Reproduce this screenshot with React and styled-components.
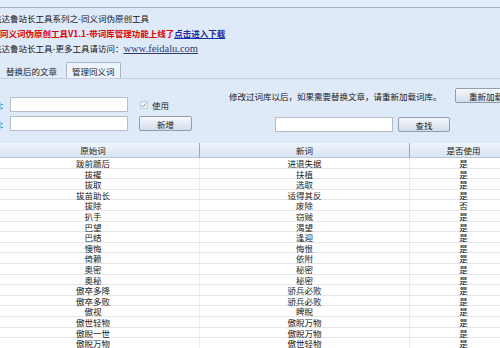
import React from 'react'
import styled, { createGlobalStyle } from 'styled-components'

const GlobalStyle = createGlobalStyle`
  html, body {
    margin: 0;
    padding: 0;
    background: #dfeaf8;
    overflow: hidden;
  }
  body {
    width: 500px;
    height: 348px;
    font-family: "Noto Sans CJK SC", "Liberation Sans", sans-serif;
    font-size: 8.5px;
    color: #222;
  }
`

const Page = styled.div`
  width: 530px;
  margin-left: -13px;
`

const TopStrip = styled.div`
  height: 7px;
  background: #e4eefb;
  border-bottom: 1px solid #a7b4c3;
`

const Intro = styled.div`
  padding-top: 3px;
`

const Line = styled.div`
  height: 15px;
  line-height: 15px;
  white-space: nowrap;
  padding-left: ${p => p.$indent}px;
  color: ${p => (p.$red ? '#e00000' : '#151515')};
  font-weight: ${p => (p.$bold ? 'bold' : 'normal')};
`

const DownloadLink = styled.a`
  color: #1b2ba0;
  text-decoration: underline;
`

const SiteLink = styled.a`
  font-family: "Liberation Serif", serif;
  font-size: 10.5px;
  color: #2c3a78;
  text-decoration: underline;
`

const Tabs = styled.div`
  display: flex;
  align-items: flex-end;
  gap: 4px;
  margin-top: 6px;
  padding-left: 14px;
  height: 16px;
  border-bottom: 1px solid #c3d0df;
`

const Tab = styled.div`
  height: 16px;
  line-height: 16px;
  box-sizing: border-box;
  padding: 0 ${p => (p.$active ? 5 : 4)}px;
  color: #222;
  background: ${p => (p.$active ? '#eef4fb' : 'transparent')};
  border: 1px solid ${p => (p.$active ? '#a9b5c2' : 'transparent')};
  border-bottom: none;
  border-radius: 2px 2px 0 0;
`

const Panel = styled.div`
  display: flex;
  height: 64px;
`

const LeftForm = styled.div`
  display: grid;
  grid-template-columns: 23px 129px 53px;
  grid-template-rows: 15px 15px;
  row-gap: 4px;
  padding-top: 18px;
  align-items: center;
`

const Label = styled.span`
  justify-self: end;
  padding-right: 7px;
  white-space: nowrap;
  color: #222;
`

const TextBox = styled.div`
  width: ${p => p.$w}px;
  height: 15px;
  box-sizing: border-box;
  background: #fff;
  border: 1px solid #b4bdc8;
`

const CheckRow = styled.div`
  display: flex;
  align-items: center;
  gap: 4px;
  padding-left: 1px;
`

const CheckBox = styled.span`
  display: flex;
  align-items: center;
  justify-content: center;
  width: 8px;
  height: 8px;
  box-sizing: border-box;
  border: 1px solid #c6ccd4;
  background: #eef1f5;
`

const Button = styled.div`
  width: ${p => p.$w}px;
  height: 15px;
  box-sizing: border-box;
  display: flex;
  align-items: center;
  justify-content: center;
  white-space: nowrap;
  color: #1e1e1e;
  background: linear-gradient(#f6f8fc, #d4ddeb);
  border: 1px solid #8e9db0;
  border-radius: 2px;
`

const RightForm = styled.div`
  display: flex;
  flex-direction: column;
  padding: 9px 0 0 37px;
`

const NoticeRow = styled.div`
  display: flex;
  align-items: center;
  gap: 13px;
  height: 15px;
  white-space: nowrap;
`

const SearchRow = styled.div`
  display: flex;
  align-items: center;
  gap: 5px;
  margin-top: 14px;
  padding-left: 46px;
`

const Table = styled.div`
  display: grid;
  grid-template-columns: 213px 210px 1fr;
  background: #fff;
`

const HeadCell = styled.div`
  height: 15px;
  line-height: 14px;
  box-sizing: border-box;
  text-align: center;
  color: #222;
  background: linear-gradient(#eef4fb, #d9e5f3);
  border-bottom: 1px solid #b6c6d8;
  border-right: ${p => (p.$last ? 'none' : '1px solid #97a9bf')};
`

const Cell = styled.div`
  height: 10.6px;
  line-height: 10px;
  box-sizing: border-box;
  text-align: center;
  white-space: nowrap;
  color: #1a1a1a;
  border-bottom: 1px solid #e6e6e6;
  border-right: ${p => (p.$last ? 'none' : '1px solid #ececec')};
`

const rows = [
  ['跋前踬后', '进退失据', '是'],
  ['拔擢', '扶植', '是'],
  ['拔取', '选取', '是'],
  ['拔苗助长', '适得其反', '是'],
  ['拔除', '废除', '否'],
  ['扒手', '窃贼', '是'],
  ['巴望', '渴望', '是'],
  ['巴结', '逢迎', '是'],
  ['懊悔', '悔恨', '是'],
  ['倚赖', '依附', '是'],
  ['奥密', '秘密', '是'],
  ['奥秘', '秘密', '是'],
  ['傲卒多降', '骄兵必败', '是'],
  ['傲卒多败', '骄兵必败', '是'],
  ['傲视', '睥睨', '是'],
  ['傲世轻物', '傲睨万物', '是'],
  ['傲睨一世', '傲睨万物', '是'],
  ['傲睨万物', '傲世轻物', '是'],
  ['傲慢', '高傲', '是'],
]

const Check = () => (
  <svg width="6" height="6" viewBox="0 0 6 6">
    <path d="M0.8 3.2 L2.4 4.8 L5.3 1.2" stroke="#8a929c" strokeWidth="1" fill="none" />
  </svg>
)

export default function App() {
  return (
    <Page>
      <GlobalStyle />
      <TopStrip />
      <Intro>
        <Line $indent={6}>飞达鲁站长工具系列之-同义词伪原创工具</Line>
        <Line $indent={13} $red $bold>
          同义词伪原创工具V1.1-带词库管理功能上线了
          <DownloadLink>点击进入下载</DownloadLink>
        </Line>
        <Line $indent={6}>
          飞达鲁站长工具-更多工具请访问：<SiteLink>www.feidalu.com</SiteLink>
        </Line>
      </Intro>
      <Tabs>
        <Tab>替换后的文章</Tab>
        <Tab $active>管理同义词</Tab>
      </Tabs>
      <Panel>
        <LeftForm>
          <Label>原始词:</Label>
          <TextBox $w={118} />
          <CheckRow>
            <CheckBox>
              <Check />
            </CheckBox>
            使用
          </CheckRow>
          <Label>新词:</Label>
          <TextBox $w={118} />
          <Button $w={53}>新增</Button>
        </LeftForm>
        <RightForm>
          <NoticeRow>
            修改过词库以后，如果需要替换文章，请重新加载词库。
            <Button $w={80}>重新加载词库</Button>
          </NoticeRow>
          <SearchRow>
            <TextBox $w={118} />
            <Button $w={52}>查找</Button>
          </SearchRow>
        </RightForm>
      </Panel>
      <Table>
        <HeadCell>原始词</HeadCell>
        <HeadCell>新词</HeadCell>
        <HeadCell $last>是否使用</HeadCell>
        {rows.map((r, i) => (
          <React.Fragment key={i}>
            <Cell>{r[0]}</Cell>
            <Cell>{r[1]}</Cell>
            <Cell $last>{r[2]}</Cell>
          </React.Fragment>
        ))}
      </Table>
    </Page>
  )
}
